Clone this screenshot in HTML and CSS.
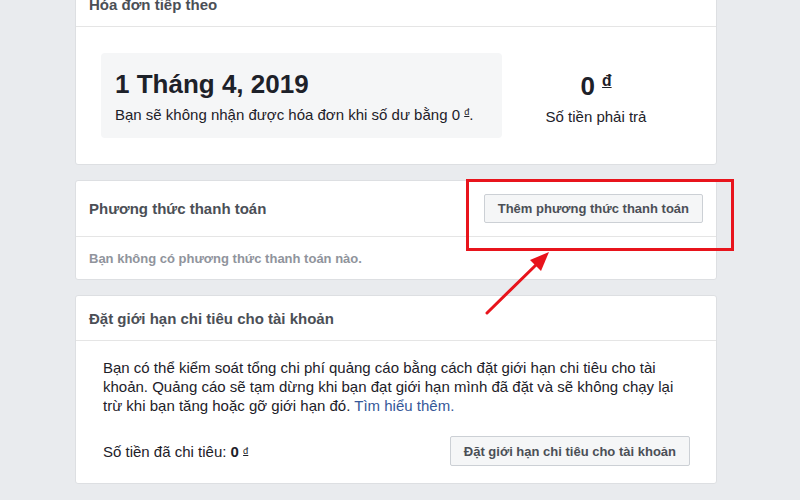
FILE: index.html
```html
<!DOCTYPE html>
<html lang="vi">
<head>
    <meta charset="UTF-8">
    <meta name="viewport" content="width=device-width, initial-scale=1.0">
    <title>Thanh toán</title>
    <link rel="stylesheet" href="styles.css">
</head>
<body>
    <div class="page">
        <div class="card">
            <div class="card-header">Hóa đơn tiếp theo</div>
            <div class="invoice">
                <div class="invoice-date">
                    <div class="big">1 Tháng 4, 2019</div>
                    <div class="note">Bạn sẽ không nhận được hóa đơn khi số dư bằng 0 <span class="cur">đ</span>.</div>
                </div>
                <div class="invoice-due">
                    <div class="big">0 <span class="cur">đ</span></div>
                    <div class="note">Số tiền phải trả</div>
                </div>
            </div>
        </div>

        <div class="card">
            <div class="card-header with-button">
                <span>Phương thức thanh toán</span>
                <button type="button" class="btn">Thêm phương thức thanh toán</button>
            </div>
            <div class="empty">Bạn không có phương thức thanh toán nào.</div>
        </div>

        <div class="card">
            <div class="card-header">Đặt giới hạn chi tiêu cho tài khoản</div>
            <div class="limit">
                <p>Bạn có thể kiểm soát tổng chi phí quảng cáo bằng cách đặt giới hạn chi tiêu cho tài khoản. Quảng cáo sẽ tạm dừng khi bạn đạt giới hạn mình đã đặt và sẽ không chạy lại trừ khi bạn tăng hoặc gỡ giới hạn đó. <a href="#">Tìm hiểu thêm.</a></p>
                <div class="limit-row">
                    <span>Số tiền đã chi tiêu: <b>0</b> <span class="cur">đ</span></span>
                    <button type="button" class="btn">Đặt giới hạn chi tiêu cho tài khoản</button>
                </div>
            </div>
        </div>
    </div>

    <!-- annotation drawn over the screenshot -->
    <div class="highlight"></div>
    <svg class="arrow" width="800" height="500" viewBox="0 0 800 500">
        <line x1="487" y1="313" x2="538" y2="263" stroke="#e8141c" stroke-width="3" stroke-linecap="round"/>
        <polygon points="549,252 530,260 541,271" fill="#e8141c"/>
    </svg>
</body>
</html>
```

FILE: styles.css
```css
body {
    font-family: "Liberation Sans", Arial, sans-serif;
    background-color: #e9ebee;
    margin: 0;
    color: #1d2129;
    overflow: hidden;
}
.page {
    width: 642px;
    margin: -19px 0 0 75px;
    display: flex;
    flex-direction: column;
    gap: 15px;
}
.card {
    background-color: #fff;
    border: 1px solid #dddfe2;
    border-radius: 3px;
}
.card-header {
    height: 44px;
    padding: 0 13px;
    display: flex;
    align-items: center;
    border-bottom: 1px solid #e5e5e5;
    font-size: 15px;
    font-weight: bold;
    color: #4b4f56;
}
.card-header.with-button {
    height: 55px;
    justify-content: space-between;
}
.btn {
    font-family: inherit;
    font-size: 13px;
    font-weight: bold;
    color: #4b4f56;
    background-color: #f5f6f7;
    border: 1px solid #ccd0d5;
    border-radius: 2px;
    height: 29px;
    padding: 0 13px;
}
.invoice {
    display: flex;
    padding: 26px 26px 26px 25px;
}
.invoice-date {
    width: 373px;
    height: 85px;
    padding: 0 14px;
    background-color: #f5f6f7;
    border-radius: 4px;
    display: flex;
    flex-direction: column;
    justify-content: center;
}
.invoice-due {
    flex: 1;
    display: flex;
    flex-direction: column;
    justify-content: center;
    align-items: center;
}
.big {
    font-size: 26px;
    font-weight: bold;
    line-height: 30px;
    margin-bottom: 7px;
}
.note {
    font-size: 15px;
    color: #1d2129;
}
.cur {
    font-size: 0.62em;
    text-decoration: underline;
    vertical-align: 0.5em;
    font-weight: normal;
}
.big .cur {
    font-weight: bold;
    font-size: 0.6em;
    vertical-align: 0.55em;
}
.empty {
    height: 42px;
    padding: 0 13px;
    display: flex;
    align-items: center;
    font-size: 13px;
    font-weight: bold;
    color: #90949c;
}
.limit {
    padding: 17px 26px 17px 27px;
    font-size: 15px;
}
.limit p {
    margin: 0;
    line-height: 19px;
}
.limit a {
    color: #365899;
    text-decoration: none;
}
.limit-row {
    display: flex;
    justify-content: space-between;
    align-items: center;
    margin-top: 21px;
}
.limit-row .btn {
    height: 30px;
}
.limit-row .cur {
    vertical-align: 0.3em;
}
.highlight {
    position: absolute;
    left: 466px;
    top: 179px;
    width: 262px;
    height: 66px;
    border: 3px solid #e8141c;
}
.arrow {
    position: absolute;
    left: 0;
    top: 0;
    pointer-events: none;
}
```
